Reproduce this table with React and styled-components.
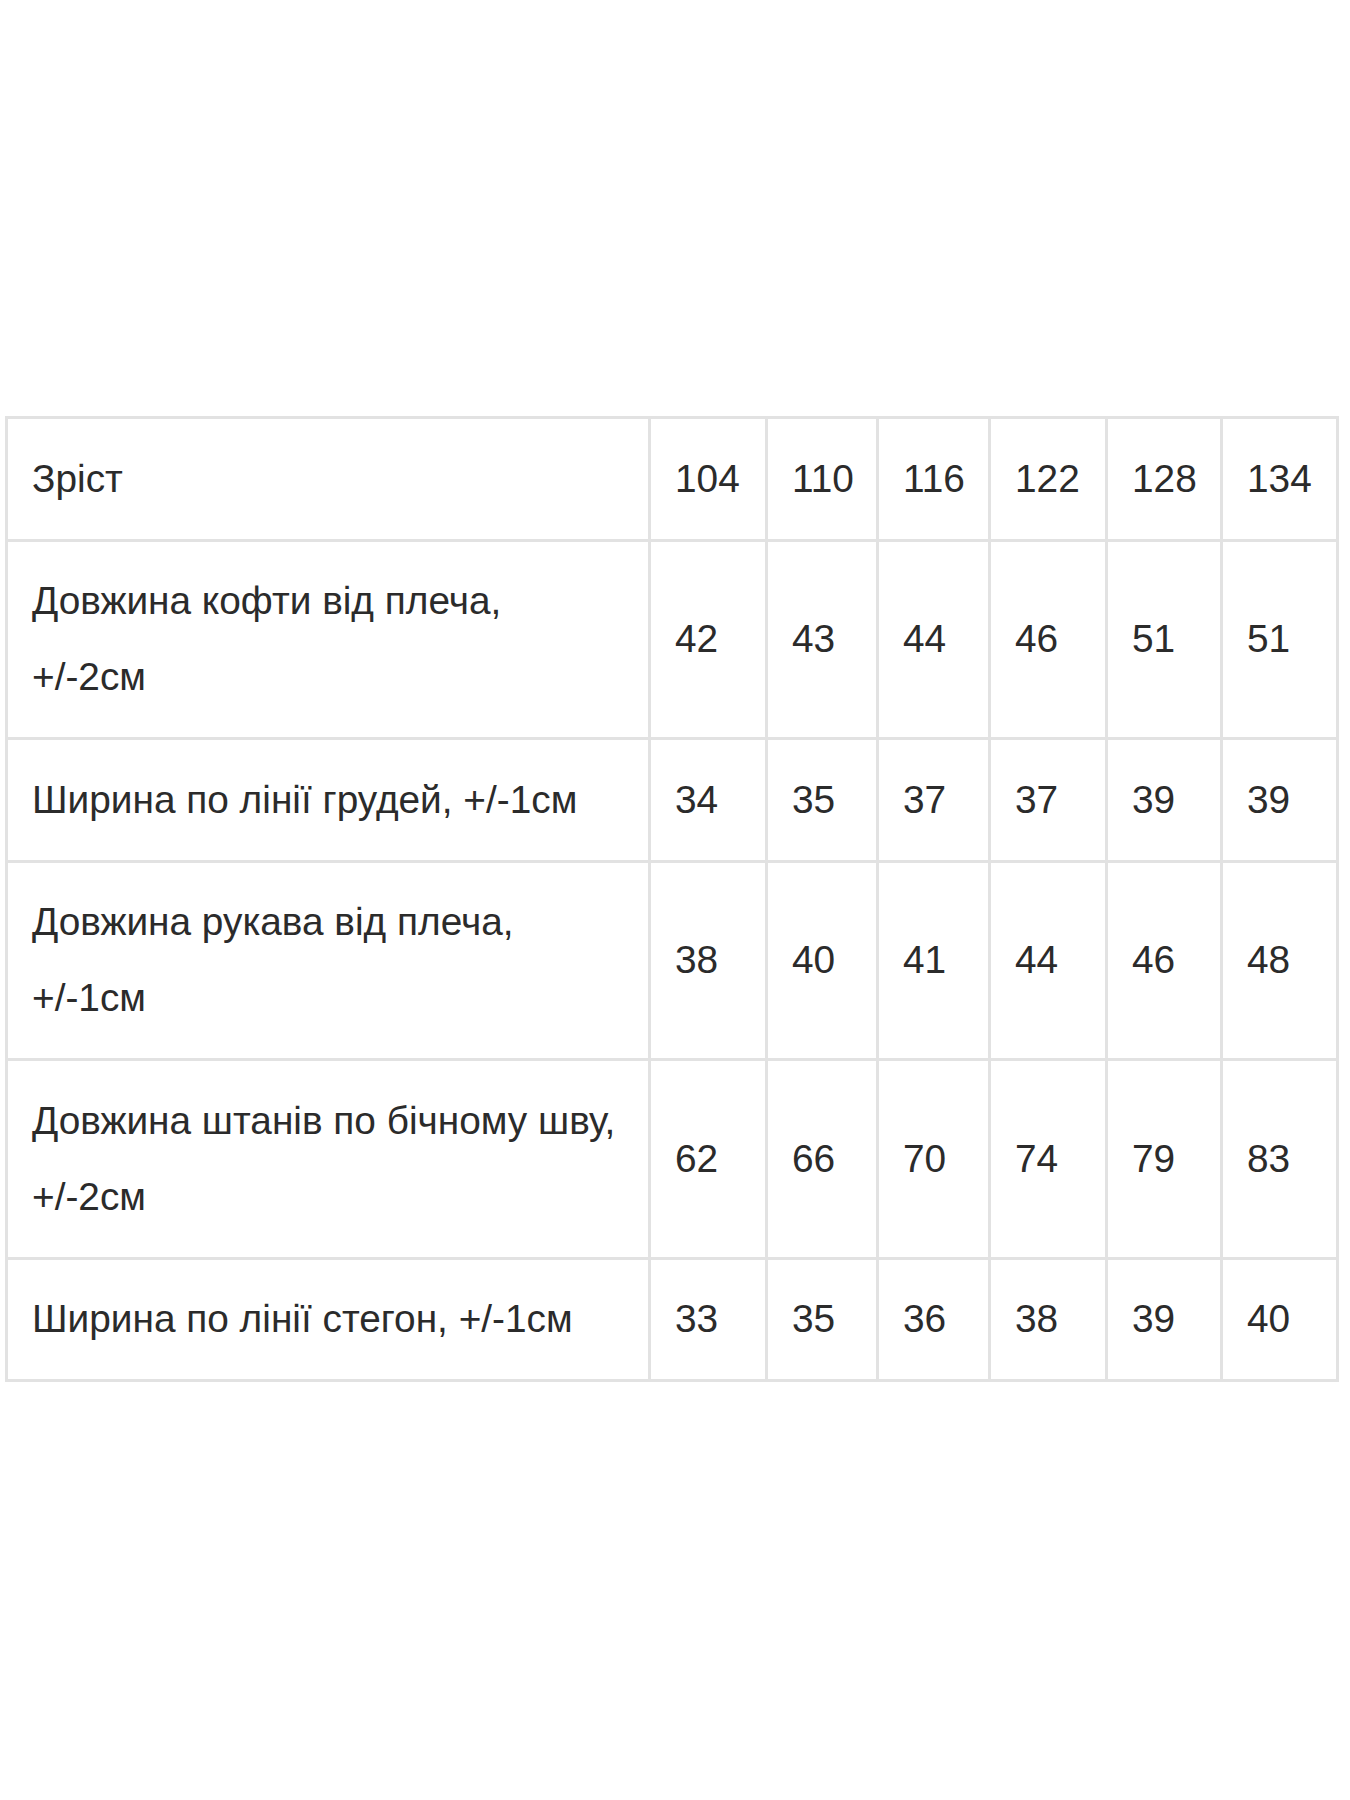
import React from 'react';
import styled, { createGlobalStyle } from 'styled-components';

const GlobalStyle = createGlobalStyle`
  html, body {
    margin: 0;
    padding: 0;
    background: #fff;
  }
`;

const Page = styled.div`
  min-height: 1800px;
  padding: 416px 0 0 5px;
  box-sizing: border-box;
  font-family: 'Liberation Sans', Arial, sans-serif;
  color: #2b2b2b;
`;

const SizeTable = styled.table`
  border-collapse: collapse;
  table-layout: fixed;
  width: 1331px;
  font-size: 38.8px;
  line-height: 76px;
`;

const Cell = styled.td`
  border: 3px solid #e2e2e2;
  padding: 21.75px 10px 21.75px 24px;
  vertical-align: middle;
  text-align: left;
  white-space: nowrap;
  overflow: hidden;
`;

const Line = styled.span`
  display: block;
`;

const sizes = ['104', '110', '116', '122', '128', '134'];
const widths = [643, 117, 111, 112, 117, 115, 116];

const rows = [
  { label: ['Довжина кофти від плеча,', '+/-2см'], values: ['42', '43', '44', '46', '51', '51'] },
  { label: ['Ширина по лінії грудей, +/-1см'], values: ['34', '35', '37', '37', '39', '39'] },
  { label: ['Довжина рукава від плеча,', '+/-1см'], values: ['38', '40', '41', '44', '46', '48'] },
  { label: ['Довжина штанів по бічному шву,', '+/-2см'], values: ['62', '66', '70', '74', '79', '83'] },
  { label: ['Ширина по лінії стегон, +/-1см'], values: ['33', '35', '36', '38', '39', '40'] },
];

const App = () => {
  return (
    <Page>
      <GlobalStyle />
      <SizeTable>
        <colgroup>
          {widths.map((w, i) => (
            <col key={i} style={{ width: w }} />
          ))}
        </colgroup>
        <tbody>
          <tr>
            <Cell>Зріст</Cell>
            {sizes.map((s) => (
              <Cell key={s}>{s}</Cell>
            ))}
          </tr>
          {rows.map((row, i) => (
            <tr key={i}>
              <Cell>
                {row.label.map((l) => (
                  <Line key={l}>{l}</Line>
                ))}
              </Cell>
              {row.values.map((v, j) => (
                <Cell key={j}>{v}</Cell>
              ))}
            </tr>
          ))}
        </tbody>
      </SizeTable>
    </Page>
  );
};

export default App;
